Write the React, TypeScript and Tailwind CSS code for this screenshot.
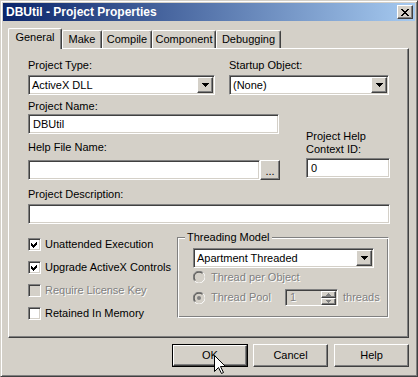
import React from "react";

const raised =
  "border border-t-white border-l-white border-r-[#404040] border-b-[#404040] shadow-[inset_-1px_-1px_0_#808080,inset_1px_1px_0_#d4d0c8]";
const sunken =
  "border border-t-[#808080] border-l-[#808080] border-r-white border-b-white shadow-[inset_1px_1px_0_#404040,inset_-1px_-1px_0_#d4d0c8]";
const disabledText = "text-[#808080] [text-shadow:1px_1px_0_#ffffff]";

function PixelGlyph({ rows, color }: { rows: string[]; color: string }) {
  const w = rows[0].length;
  const h = rows.length;
  const rects: React.ReactElement[] = [];
  rows.forEach((r, y) =>
    r.split("").forEach((c, x) => {
      if (c === "X") rects.push(<rect key={`${x}-${y}`} x={x} y={y} width={1} height={1} fill={color} />);
    })
  );
  return (
    <svg width={w} height={h} shapeRendering="crispEdges">
      {rects}
    </svg>
  );
}

const arrowRows = ["XXXXXXX", ".XXXXX.", "..XXX..", "...X..."];
const closeRows = ["XX....XX", ".XX..XX.", "..XXXX..", "...XX...", "..XXXX..", ".XX..XX.", "XX....XX"];

function DropBtn() {
  return (
    <div className={`w-[16px] h-[16px] shrink-0 bg-[#d4d0c8] ${raised} flex items-center justify-center`}>
      <PixelGlyph rows={arrowRows} color="#000" />
    </div>
  );
}

function Combo({ value, className }: { value: string; className: string }) {
  return (
    <div className={`h-[20px] p-[1px] bg-white ${sunken} flex items-center ${className}`}>
      <div className="flex-1 pl-[2px] leading-[16px] h-[16px] overflow-hidden whitespace-nowrap">{value}</div>
      <DropBtn />
    </div>
  );
}

function TextBox({ value, className }: { value?: string; className: string }) {
  return (
    <div className={`h-[20px] p-[1px] bg-white ${sunken} flex items-center ${className}`}>
      <div className="pl-[3px] leading-[16px]">{value}</div>
    </div>
  );
}

function CheckBox({ checked, disabled, label }: { checked?: boolean; disabled?: boolean; label: string }) {
  return (
    <div className="flex items-center h-[13px]">
      <div
        className={`w-[13px] h-[13px] shrink-0 ${sunken} ${disabled ? "bg-[#d4d0c8]" : "bg-white"} relative`}
      >
        {checked && (
          <svg width="13" height="13" className="absolute left-[-1px] top-[-1px]" shapeRendering="crispEdges">
            <polygon points="3,5 5,7 9,3 9,6 5,10 3,8" fill="#000" />
          </svg>
        )}
      </div>
      <span className={`ml-[4px] leading-[13px] whitespace-nowrap ${disabled ? disabledText : ""}`}>{label}</span>
    </div>
  );
}

function Radio({ selected }: { selected?: boolean }) {
  return (
    <svg width="12" height="12" className="shrink-0">
      <circle cx="6" cy="6" r="5.5" fill="#d4d0c8" />
      <path d="M10.2 1.8 A5.5 5.5 0 0 0 1.8 10.2" stroke="#808080" strokeWidth="1" fill="none" />
      <path d="M1.8 10.2 A5.5 5.5 0 0 0 10.2 1.8" stroke="#ffffff" strokeWidth="1" fill="none" />
      <path d="M9.5 2.5 A4.5 4.5 0 0 0 2.5 9.5" stroke="#404040" strokeWidth="1" fill="none" />
      <path d="M2.5 9.5 A4.5 4.5 0 0 0 9.5 2.5" stroke="#d4d0c8" strokeWidth="1" fill="none" />
      {selected && <circle cx="6" cy="6" r="2" fill="#808080" />}
    </svg>
  );
}

function SpinBtn({ up }: { up: boolean }) {
  return (
    <div className={`w-[15px] h-[7px] bg-[#d4d0c8] ${raised} flex items-center justify-center`}>
      <svg width="5" height="3" shapeRendering="crispEdges">
        {up ? (
          <polygon points="2.5,0 5,3 0,3" fill="#808080" />
        ) : (
          <polygon points="0,0 5,0 2.5,3" fill="#808080" />
        )}
      </svg>
    </div>
  );
}

function Button({ label, def, className }: { label: string; def?: boolean; className: string }) {
  if (def) {
    return (
      <div className={`h-[23px] border border-black ${className}`}>
        <div className={`w-full h-full ${raised} flex items-center justify-center leading-[13px]`}>{label}</div>
      </div>
    );
  }
  return (
    <div className={`h-[23px] ${raised} flex items-center justify-center leading-[13px] ${className}`}>{label}</div>
  );
}

function Tab({ label, w, selected }: { label: string; w: string; selected?: boolean }) {
  return (
    <div
      className={`${w} ${
        selected ? "h-[21px] -mb-px z-10" : "h-[18px]"
      } relative bg-[#d4d0c8] border-t border-l border-r border-t-white border-l-white border-r-[#404040] rounded-t-[2px] shadow-[inset_-1px_0_0_#808080] pt-[2px] text-center leading-[13px] whitespace-nowrap`}
    >
      {label}
    </div>
  );
}

export default function App() {
  return (
    <div className="relative w-[418px] h-[377px] bg-[#d4d0c8] border border-t-[#d4d0c8] border-l-[#d4d0c8] border-r-[#404040] border-b-[#404040] shadow-[inset_1px_1px_0_#ffffff,inset_-1px_-1px_0_#808080] p-[2px] text-[11px] text-black font-['Liberation_Sans',Arial,sans-serif] overflow-hidden select-none">
      {/* Title bar */}
      <div className="h-[18px] bg-[linear-gradient(to_right,#0a246a,#a6caf0)] flex items-center justify-between">
        <div className="pl-[3px] text-white font-bold text-[12px] leading-[14px] whitespace-nowrap">
          DBUtil - Project Properties
        </div>
        <div className={`w-[16px] h-[14px] mr-[2px] bg-[#d4d0c8] ${raised} flex items-center justify-center`}>
          <PixelGlyph rows={closeRows} color="#000" />
        </div>
      </div>

      {/* Tabs */}
      <div className="mt-[7px] ml-[5px] h-[20px] flex items-end">
        <Tab label="General" w="w-[54px]" selected />
        <Tab label="Make" w="w-[40px]" />
        <Tab label="Compile" w="w-[50px]" />
        <Tab label="Component" w="w-[64px]" />
        <Tab label="Debugging" w="w-[65px]" />
      </div>

      {/* Panel */}
      <div className="ml-[5px] w-[401px] h-[290px] border border-t-white border-l-white border-r-[#404040] border-b-[#404040] shadow-[inset_-1px_-1px_0_#808080] pl-[19px] pt-[10px]">
        {/* Row 1 */}
        <div className="flex">
          <div className="w-[187px]">
            <div className="h-[13px] leading-[13px]">Project Type:</div>
            <Combo value="ActiveX DLL" className="mt-[3px] w-[187px]" />
          </div>
          <div className="ml-[14px] w-[160px]">
            <div className="h-[13px] leading-[13px]">Startup Object:</div>
            <Combo value="(None)" className="mt-[3px] w-[160px]" />
          </div>
        </div>

        {/* Row 2 */}
        <div className="flex mt-[5px]">
          <div className="w-[251px]">
            <div className="h-[13px] leading-[13px]">Project Name:</div>
            <TextBox value="DBUtil" className="mt-[1px] w-[251px]" />
            <div className="mt-[7px] h-[13px] leading-[13px]">Help File Name:</div>
            <div className="mt-[6px] flex w-[252px]">
              <TextBox className="w-[232px]" />
              <div className={`w-[20px] h-[20px] bg-[#d4d0c8] ${raised} flex items-end justify-center pb-[4px] leading-[8px]`}>
                ...
              </div>
            </div>
          </div>
          <div className="ml-[27px] self-end mb-[2px]">
            <div className="leading-[13px]">
              Project Help
              <br />
              Context ID:
            </div>
            <TextBox value="0" className="mt-[2px] w-[84px]" />
          </div>
        </div>

        {/* Row 3 */}
        <div className="mt-[8px] h-[13px] leading-[13px]">Project Description:</div>
        <TextBox className="mt-[3px] w-[362px]" />

        {/* Row 4 */}
        <div className="flex mt-[13px]">
          <div className="w-[149px] pt-[1px] flex flex-col gap-[10px]">
            <CheckBox checked label="Unattended Execution" />
            <CheckBox checked label="Upgrade ActiveX Controls" />
            <CheckBox disabled label="Require License Key" />
            <CheckBox label="Retained In Memory" />
          </div>
          <div className="relative w-[212px] h-[81px] border border-t-[#808080] border-l-[#808080] border-r-white border-b-white shadow-[inset_1px_1px_0_#ffffff,inset_-1px_-1px_0_#808080] pl-[15px] pt-[10px]">
            <div className="absolute left-[7px] top-[-7px] px-[2px] bg-[#d4d0c8] leading-[13px] whitespace-nowrap">
              Threading Model
            </div>
            <Combo value="Apartment Threaded" className="w-[181px]" />
            <div className="mt-[3px] h-[12px] flex items-center">
              <Radio />
              <span className={`ml-[6px] leading-[13px] ${disabledText}`}>Thread per Object</span>
            </div>
            <div className="mt-[6px] h-[17px] flex items-center">
              <Radio selected />
              <span className={`ml-[6px] w-[74px] leading-[13px] ${disabledText}`}>Thread Pool</span>
              <div className={`w-[53px] h-[17px] p-[1px] bg-[#d4d0c8] ${sunken} flex items-center`}>
                <span className={`flex-1 pl-[3px] leading-[13px] ${disabledText}`}>1</span>
                <div className="flex flex-col">
                  <SpinBtn up />
                  <SpinBtn up={false} />
                </div>
              </div>
              <span className={`ml-[5px] leading-[13px] ${disabledText}`}>threads</span>
            </div>
          </div>
        </div>
      </div>

      {/* Buttons */}
      <div className="mt-[6px] flex justify-end pr-[6px]">
        <Button label="OK" def className="w-[76px]" />
        <Button label="Cancel" className="w-[75px] ml-[5px]" />
        <Button label="Help" className="w-[75px] ml-[6px]" />
      </div>

      {/* Mouse cursor */}
      <svg width="13" height="20" className="absolute left-[213px] top-[354px]">
        <polygon
          points="0.5,0.5 0.5,16.5 4.5,12.5 7.5,18.5 9.5,17.5 6.5,11.5 11.5,11.5"
          fill="#fff"
          stroke="#000"
          strokeWidth="1"
        />
      </svg>
    </div>
  );
}
